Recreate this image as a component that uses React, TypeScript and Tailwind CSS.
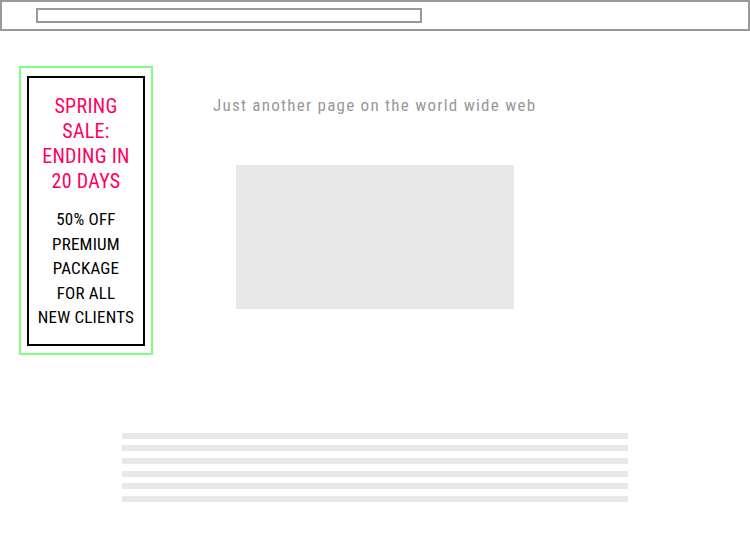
export default function App() {
  const lineMargins = ["mt-0", "mt-[6px]", "mt-[7px]", "mt-[7px]", "mt-[6px]", "mt-[7px]"];
  return (
    <div className="w-[750px] h-[550px] bg-white [font-family:'Roboto_Condensed',sans-serif] overflow-hidden">
      <header className="h-[31px] border-2 border-[#999999] pl-[34px] pt-[6px]">
        <div className="w-[386px] h-[15px] border-2 border-[#999999]" />
      </header>
      <div className="flex items-start">
        <aside className="ml-[19px] mt-[35px] w-[134px] h-[289px] border-2 border-[#80ff80] pt-[8px] px-[6px] pb-[7px]">
          <div className="w-[118px] h-[270px] border-2 border-black flex flex-col items-center text-center">
            <div className="mt-[16px] text-[20px] leading-[25px] tracking-[0.3px] text-[#ff0062]">
              SPRING
              <br />
              SALE:
              <br />
              ENDING IN
              <br />
              20 DAYS
            </div>
            <div className="mt-[13px] text-[17px] leading-[24.5px] tracking-[0.2px] text-black">
              50% OFF
              <br />
              PREMIUM
              <br />
              PACKAGE
              <br />
              FOR ALL
              <br />
              NEW CLIENTS
            </div>
          </div>
        </aside>
        <main className="ml-[60px] mt-[62px] flex flex-col">
          <p className="text-[17px] leading-[24px] tracking-[1.25px] text-[#999999] whitespace-nowrap">
            Just another page on the world wide web
          </p>
          <div className="ml-[23px] mt-[48px] w-[278px] h-[144px] bg-[#e8e8e8]" />
        </main>
      </div>
      <div className="ml-[122px] mt-[78px] w-[506px] flex flex-col">
        {lineMargins.map((m, i) => (
          <div key={i} className={`${m} h-[6px] bg-[#e8e8e8]`} />
        ))}
      </div>
    </div>
  );
}
